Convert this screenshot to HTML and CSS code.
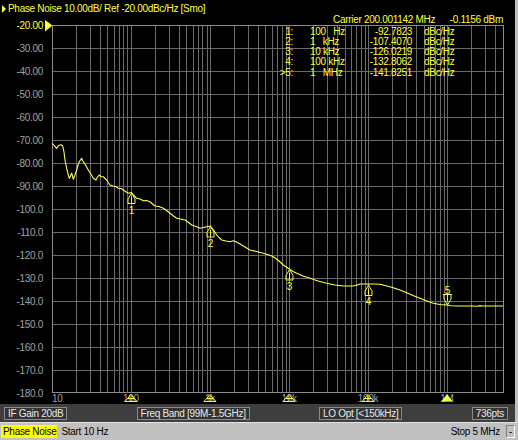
FILE: index.html
```html
<!DOCTYPE html>
<html>
<head>
<meta charset="utf-8">
<link rel="stylesheet" href="styles.css">
</head>
<body>
<div class="screen">
  <div class="main">
    <div class="panel">
      <div class="title"><span class="arrow"></span>Phase Noise 10.00dB/ Ref -20.00dBc/Hz [Smo]</div>
      <svg class="chart" width="515" height="388" viewBox="0 16 515 388">
        <defs>
          <g id="mk"><path d="M0 0.5L3.5 6.5V11H-3.5V6.5Z M0 4V11"/></g>
          <g id="mka"><path d="M0 -0.5L3.5 -6.5V-11H-3.5V-6.5Z M-4.5 -11H4.5 M0 -4V-11"/></g>
          <g id="bm"><path d="M0 0.5L6 7.5H-6Z M-3 4.5H3 M0 2V7.5"/></g>
        </defs>
        <path class="grid" d="M76.5 25V393M90.5 25V393M100.5 25V393M107.5 25V393M114.5 25V393M119.5 25V393M123.5 25V393M127.5 25V393M131.5 25V393M155.5 25V393M169.5 25V393M179.5 25V393M186.5 25V393M193.5 25V393M198.5 25V393M202.5 25V393M207.5 25V393M210.5 25V393M234.5 25V393M248.5 25V393M258.5 25V393M265.5 25V393M272.5 25V393M277.5 25V393M282.5 25V393M286.5 25V393M289.5 25V393M313.5 25V393M327.5 25V393M337.5 25V393M345.5 25V393M351.5 25V393M356.5 25V393M361.5 25V393M365.5 25V393M368.5 25V393M392.5 25V393M406.5 25V393M416.5 25V393M424.5 25V393M430.5 25V393M435.5 25V393M440.5 25V393M444.5 25V393M447.5 25V393M471.5 25V393M485.5 25V393M495.5 25V393M52 48.5H503M52 71.5H503M52 94.5H503M52 117.5H503M52 140.5H503M52 163.5H503M52 186.5H503M52 209.5H503M52 232.5H503M52 255.5H503M52 278.5H503M52 301.5H503M52 324.5H503M52 347.5H503M52 370.5H503"/>
        <rect class="frame" x="52.5" y="25.5" width="451" height="367"/>
        <g class="ylab">
          <text x="43" y="25" class="ref">-20.00</text>
          <text x="43" y="48">-30.00</text>
          <text x="43" y="71">-40.00</text>
          <text x="43" y="94">-50.00</text>
          <text x="43" y="117">-60.00</text>
          <text x="43" y="140">-70.00</text>
          <text x="43" y="163">-80.00</text>
          <text x="43" y="186">-90.00</text>
          <text x="43" y="209">-100.0</text>
          <text x="43" y="232">-110.0</text>
          <text x="43" y="255">-120.0</text>
          <text x="43" y="278">-130.0</text>
          <text x="43" y="301">-140.0</text>
          <text x="43" y="324">-150.0</text>
          <text x="43" y="347">-160.0</text>
          <text x="43" y="370">-170.0</text>
          <text x="43" y="393">-180.0</text>
        </g>
        <path class="refmark" d="M45 20L52.5 25.5L45 31.5Z"/>
        <g class="xlab">
          <text x="52" y="398">10</text>
          <text x="131" y="398" class="mid">100</text>
          <text x="210" y="398" class="mid">1k</text>
          <text x="289" y="398" class="mid">10k</text>
          <text x="368" y="398" class="mid">100k</text>
          <text x="447" y="398" class="mid">1M</text>
        </g>
        <path class="trace" d="M52.3 143.3L54.5 146L56.7 148.3L58.5 145.5L60 145L61.5 144.8L62.7 146L64 152L65 160L67 170L69.3 178.3L70.5 176L71.7 173.3L72.5 176L73.3 179.3L75 175L76.7 170L78 165L79.3 161.7L80.5 160L81.7 158.3L82.5 160.5L83.3 161.7L85.5 165L88.3 170L90.5 173.5L93.3 178.3L96 180L97.5 177L99.3 175L101 176.5L103.3 176.7L105 178.5L106.7 180L108.5 183L110 185L113 186L115.5 186.5L118.3 188.3L121 188.5L123.3 190L125.5 191.5L128.3 193.3L131.5 192.5L134 195.5L136.7 198.3L140 199L143.3 200.7L146.5 200.5L150 201.7L152.5 204L155 206L159 206.5L163.3 208.3L166.5 210.5L170 213.3L173.5 216L176.7 218.3L180.5 219L185 220L188.5 222.5L191.7 225L196 226.5L200 228.3L203.5 227.5L206.7 226.7L210.5 226L213.5 230L216.7 235L219 237.5L221.7 240L226 241L230 241.7L233.3 240.7L236.5 242L240 244L245 247L250 250L256.5 251.5L263.3 253.3L268.5 254.8L273.3 256.7L278.5 260.5L283.3 265L289.3 269L293 271.5L296.7 273.3L303 276L310 278.3L318 281L326.7 283.3L335 285L343.3 286L353.3 286L357 285L360 284L368.3 284L374 284L380 284.3L387 286L393.3 287.7L400 290L406.7 292.7L413 295.5L420 298.3L427 301L433.3 303.3L440 304.5L446.7 305L451 305.8L456.7 306L470 306L478 306.2L480 305.6L482 306L503 306"/>
        <g class="marker">
          <use href="#mk" x="131.5" y="192.5"/>
          <use href="#mk" x="210.5" y="226"/>
          <use href="#mk" x="289.5" y="269"/>
          <use href="#mk" x="368.5" y="284.5"/>
          <use href="#mka" x="447.5" y="305.5"/>
          <use href="#bm" x="131" y="394"/>
          <use href="#bm" x="210" y="394"/>
          <use href="#bm" x="289" y="394"/>
          <use href="#bm" x="368" y="394"/>
        </g>
        <path class="bmfill" d="M447 394.5L453 401.5H441Z"/>
        <g class="mnum">
          <text x="131.5" y="210">1</text>
          <text x="210.5" y="243.5">2</text>
          <text x="289.5" y="286">3</text>
          <text x="368.5" y="301.5">4</text>
          <text x="447.5" y="290">5</text>
        </g>
      </svg>
      <div class="readout">
        <div class="carrier"><span>Carrier 200.001142 MHz</span><span>-0.1156 dBm</span></div>
        <div class="rows">
          <span class="idx">1:</span><span class="freq">100   Hz</span><span class="val">-92.7823</span><span class="unit">dBc/Hz</span>
          <span class="idx">2:</span><span class="freq">1   kHz</span><span class="val">-107.4070</span><span class="unit">dBc/Hz</span>
          <span class="idx">3:</span><span class="freq">10 kHz</span><span class="val">-126.0219</span><span class="unit">dBc/Hz</span>
          <span class="idx">4:</span><span class="freq">100 kHz</span><span class="val">-132.8062</span><span class="unit">dBc/Hz</span>
          <span class="idx">&gt;5:</span><span class="freq">1   MHz</span><span class="val">-141.8251</span><span class="unit">dBc/Hz</span>
        </div>
      </div>
    </div>
    <div class="status">
      <span class="sbox">IF Gain 20dB</span>
      <span class="sbox">Freq Band [99M-1.5GHz]</span>
      <span class="sbox">LO Opt [&lt;150kHz]</span>
      <span class="sbox">736pts</span>
    </div>
  </div>
  <div class="bottom">
    <span class="pn">Phase Noise</span>
    <span class="start">Start 10 Hz</span>
    <span class="stop">Stop 5 MHz</span>
    <span class="dash">-</span>
  </div>
</div>
</body>
</html>
```

FILE: styles.css
```css
html, body {
  margin: 0;
  padding: 0;
}
body {
  background: #c0c0c0;
  width: 518px;
  height: 440px;
  overflow: hidden;
  font-family: "Liberation Sans", Arial, sans-serif;
  font-size: 10px;
  letter-spacing: -0.3px;
}
.screen {
  display: flex;
  flex-direction: column;
  width: 518px;
  height: 440px;
}
.main {
  width: 515px;
  display: flex;
  flex-direction: column;
}
.panel {
  position: relative;
  background: #000;
  height: 404px;
}
.title {
  height: 16px;
  box-sizing: border-box;
  padding-top: 2px;
  line-height: 14px;
  color: #ffff3c;
  display: flex;
  align-items: center;
  white-space: nowrap;
}
.arrow {
  width: 0;
  height: 0;
  border-left: 4px solid #ffff3c;
  border-top: 4px solid transparent;
  border-bottom: 4px solid transparent;
  margin: 0 2px 0 2px;
}
.chart {
  display: block;
}
.chart text {
  font-family: "Liberation Sans", Arial, sans-serif;
  font-size: 10px;
  letter-spacing: -0.3px;
  dominant-baseline: central;
}
.grid {
  stroke: #6a6a6a;
  stroke-width: 1;
  fill: none;
}
.frame {
  stroke: #8c8c8c;
  stroke-width: 1;
  fill: none;
}
.ylab text {
  fill: #a0a0a0;
  text-anchor: end;
}
.ylab text.ref {
  fill: #ffff3c;
}
.refmark {
  fill: #ffff3c;
}
.xlab text {
  fill: #a0a0a0;
}
.xlab text.mid {
  text-anchor: middle;
}
.trace {
  fill: none;
  stroke: #ffff50;
  stroke-width: 1.1;
  stroke-linejoin: round;
}
.marker {
  fill: none;
  stroke: #f4f43c;
  stroke-width: 1;
}
.bmfill {
  fill: #ffff3c;
}
.mnum text {
  fill: #ffff3c;
  text-anchor: middle;
}
.readout {
  position: absolute;
  left: 278px;
  top: 14px;
  width: 225px;
  color: #ffff3c;
}
.carrier {
  display: flex;
  justify-content: space-between;
  padding-left: 55px;
  height: 12.5px;
  line-height: 11.5px;
}
.rows {
  display: grid;
  grid-template-columns: 15px 62px 57px auto;
  line-height: 10.3px;
  white-space: pre;
}
.idx {
  text-align: right;
}
.freq {
  padding-left: 17px;
}
.val {
  text-align: right;
}
.unit {
  padding-left: 12px;
}
.status {
  height: 18px;
  box-sizing: border-box;
  background: #3e3e3e;
  display: flex;
  justify-content: space-between;
  align-items: center;
  padding: 1px 7px 0 4px;
}
.sbox {
  height: 13px;
  line-height: 11px;
  box-sizing: border-box;
  border: 1px solid #8a8a8a;
  padding: 0 3px;
  color: #e8e8e8;
  background: #343434;
  white-space: nowrap;
}
.bottom {
  height: 18px;
  box-sizing: border-box;
  background: #c0c0c0;
  border-top: 1px solid #e4e4e4;
  display: flex;
  align-items: center;
  color: #000;
  white-space: nowrap;
}
.pn {
  background: #ffff00;
  margin-left: 1px;
  padding: 0 1px 0 2px;
  height: 13px;
  line-height: 13px;
}
.start {
  margin-left: 4px;
}
.stop {
  margin-left: auto;
}
.dash {
  margin: 0 3px 0 6px;
  width: 9px;
  height: 13px;
  box-sizing: border-box;
  border: 1px solid;
  border-color: #808080 #ffffff #ffffff #808080;
  text-align: center;
  line-height: 11px;
}
```
